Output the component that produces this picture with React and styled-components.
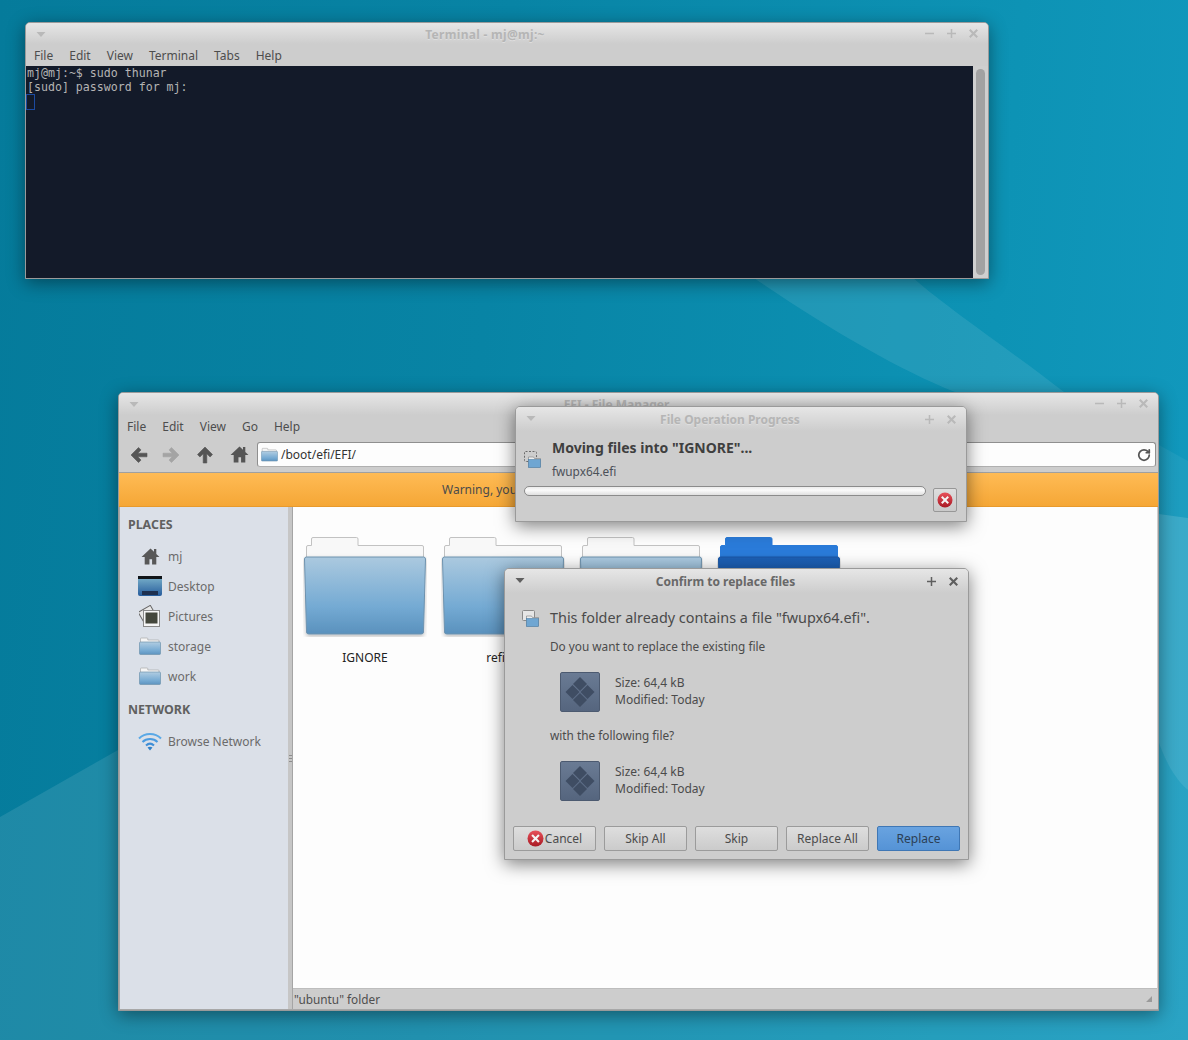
import styled, { createGlobalStyle } from "styled-components";
import { RotateCw } from "lucide-react";

const GlobalStyle = createGlobalStyle`
	html, body {
		margin: 0;
		padding: 0;
	}
	body {
		font-family: "Noto Sans", sans-serif;
		font-size: 12px;
		color: #4b4b4b;
	}
`;

const Desktop = styled.div`
	position: relative;
	width: 1188px;
	height: 1040px;
	overflow: hidden;
	background: linear-gradient(95deg, #057b9b 0%, #0884a5 40%, #0d93b5 80%, #1299be 100%);
`;

const Wallpaper = styled.svg`
	position: absolute;
	inset: 0;
`;

const Window = styled.div`
	position: absolute;
	left: ${(p) => p.$x}px;
	top: ${(p) => p.$y}px;
	width: ${(p) => p.$w}px;
	height: ${(p) => p.$h}px;
	box-sizing: border-box;
	display: flex;
	flex-direction: column;
	background: #cdcdcd;
	border: 1px solid #9a9a9a;
	border-radius: 5px 5px 0 0;
	box-shadow: 0 4px 18px rgba(0, 0, 0, ${(p) => p.$shadow || 0.42});
`;

const TitleBar = styled.div`
	position: relative;
	flex: none;
	height: ${(p) => p.$h || 22}px;
	box-sizing: border-box;
	padding-right: ${(p) => p.$reserve || 22}px;
	padding-top: ${(p) => p.$nudge || 0}px;
	display: flex;
	align-items: center;
	justify-content: center;
	border-radius: 4px 4px 0 0;
	background: linear-gradient(#e6e6e6, #cdcdcd);
	font-size: 12px;
	font-weight: 700;
	letter-spacing: ${(p) => p.$spacing || 0}px;
	color: ${(p) => (p.$active ? "#686868" : "#b5b5b5")};
	text-shadow: ${(p) => (p.$active ? "none" : "0 1px 0 #dedede")};
`;

const TitleMenu = styled.svg`
	position: absolute;
	left: 9px;
	top: 8px;
`;

const TitleButtons = styled.div`
	position: absolute;
	right: 10px;
	top: ${(p) => p.$top || 6}px;
	display: flex;
	gap: 13px;
`;

const MenuBar = styled.div`
	flex: none;
	height: 22px;
	display: flex;
	align-items: center;
	gap: 16px;
	padding-left: 8px;
	font-size: 12px;
	color: #4d4d4d;
`;

const TerminalBody = styled.div`
	flex: 1;
	display: flex;
	min-height: 0;
`;

const Screen = styled.pre`
	flex: 1;
	margin: 0;
	padding: 0 1px;
	background: #131a29;
	color: #b4b4b4;
	font-family: "DejaVu Sans Mono", monospace;
	font-size: 11.6px;
	line-height: 14px;
`;

const Cursor = styled.div`
	width: 9px;
	height: 16px;
	margin-left: -1px;
	border: 1px solid #1c4aa0;
	box-sizing: border-box;
`;

const ScrollTrack = styled.div`
	flex: none;
	width: 15px;
	background: #cfcfcf;
	padding: 3px;
	box-sizing: border-box;
	display: flex;
`;

const ScrollThumb = styled.div`
	flex: 1;
	background: #a2a2a2;
	border-radius: 5px;
`;

const Toolbar = styled.div`
	flex: none;
	height: 35px;
	box-sizing: border-box;
	display: flex;
	align-items: flex-start;
	padding: 5px 2px 0 11px;
`;

const ToolIcon = styled.div`
	width: ${(p) => p.$w}px;
	height: 25px;
	display: flex;
	align-items: center;
`;

const PathEntry = styled.div`
	flex: 1;
	height: 25px;
	box-sizing: border-box;
	display: flex;
	align-items: center;
	gap: 3px;
	padding: 0 4px 0 3px;
	background: #fdfdfd;
	border: 1px solid #8f8f8f;
	border-bottom-color: #b0b0b0;
	border-radius: 3px;
	font-size: 12px;
	color: #333;
`;

const EntrySpacer = styled.div`
	flex: 1;
`;

const Warning = styled.div`
	flex: none;
	height: 35px;
	box-sizing: border-box;
	display: flex;
	align-items: center;
	padding-left: 323px;
	background: linear-gradient(#ffbb55, #f5a736);
	border-top: 1px solid #a0a0a0;
	border-bottom: 1px solid #e89a2c;
	font-size: 12px;
	color: #4b4b4b;
`;

const Panes = styled.div`
	flex: 1;
	display: flex;
	min-height: 0;
	border-left: 1px solid #a8a8a8;
	border-bottom: 1px solid #a8a8a8;
`;

const Sidebar = styled.div`
	flex: none;
	width: 168px;
	box-sizing: border-box;
	padding: 7px 0 0 8px;
	background: #dbe0e8;
`;

const SideHeading = styled.div`
	height: 20px;
	display: flex;
	align-items: center;
	margin-top: ${(p) => p.$top || 0}px;
	margin-bottom: 7px;
	font-weight: 700;
	font-size: 12.4px;
	color: #606060;
`;

const SideRow = styled.div`
	height: 30px;
	display: flex;
	align-items: center;
	gap: 5px;
	padding-left: 8px;
	color: #6b6b6b;
	font-size: 12px;
`;

const SideGlyph = styled.div`
	width: 26px;
	margin-left: 1px;
	display: flex;
	justify-content: center;
`;

const Handle = styled.div`
	position: relative;
	flex: none;
	width: 5px;
	background: #c6c6c6;
	border-right: 1px solid #a5a5a5;
	box-sizing: border-box;
`;

const Grip = styled.div`
	position: absolute;
	left: 1px;
	top: 248px;
	width: 3px;
	height: 7px;
	background: repeating-linear-gradient(#8d8d8d 0 1px, transparent 1px 3px);
`;

const MainColumn = styled.div`
	flex: 1;
	display: flex;
	flex-direction: column;
	min-width: 0;
`;

const Icons = styled.div`
	flex: 1;
	background: #fdfdfd;
	display: flex;
	gap: 12px;
	padding: 26px 0 0 9px;
	margin-right: 1px;
	border-bottom: 1px solid #bdbdbd;
`;

const IconCell = styled.div`
	width: 126px;
	display: flex;
	flex-direction: column;
	align-items: center;
	gap: 13px;
	color: #222;
	font-size: 12px;
	line-height: 16px;
`;

const StatusBar = styled.div`
	flex: none;
	height: 20px;
	display: flex;
	align-items: center;
	justify-content: space-between;
	padding: 0 5px 0 1px;
	font-size: 11.8px;
	color: #4f4f4f;
`;

const ProgressBody = styled.div`
	flex: 1;
	display: flex;
	flex-direction: column;
	padding: 7px 9px 0 8px;
`;

const ProgressTop = styled.div`
	display: flex;
	align-items: flex-start;
	gap: 11px;
`;

const OpIconSlot = styled.div`
	padding-top: 13px;
`;

const ProgressTitle = styled.div`
	font-size: 14px;
	font-weight: 700;
	line-height: 20px;
	color: #3f3f3f;
`;

const ProgressFile = styled.div`
	margin-top: 4px;
	font-size: 11.8px;
	line-height: 18px;
	color: #4b5058;
`;

const ProgressRow = styled.div`
	display: flex;
	align-items: flex-start;
	gap: 7px;
	margin-top: 6px;
`;

const ProgressTrack = styled.div`
	flex: 1;
	height: 10px;
	box-sizing: border-box;
	border: 1px solid #8b8b8b;
	border-radius: 5px;
	background: linear-gradient(#ececec, #fafafa 40%, #e0e0e0);
`;

const StopButton = styled.div`
	flex: none;
	width: 24px;
	height: 24px;
	margin-top: 2px;
	box-sizing: border-box;
	display: flex;
	align-items: center;
	justify-content: center;
	border: 1px solid #979797;
	border-radius: 2px;
	background: linear-gradient(#dedede, #c9c9c9);
`;

const ConfirmBody = styled.div`
	flex: 1;
	display: flex;
	flex-direction: column;
	padding: 15px 8px 8px 17px;
`;

const Headline = styled.div`
	display: flex;
	align-items: center;
	gap: 11px;
	font-size: 14.4px;
	line-height: 20px;
	color: #4a4a4a;
`;

const Prompt = styled.div`
	padding-left: 28px;
	margin-top: ${(p) => p.$top}px;
	font-size: 11.8px;
	line-height: 18px;
	color: #4b4b4b;
`;

const FileRow = styled.div`
	display: flex;
	align-items: center;
	gap: 15px;
	padding-left: 38px;
	margin-top: 17px;
`;

const FileThumb = styled.div`
	width: 40px;
	height: 40px;
	box-sizing: border-box;
	display: flex;
	align-items: center;
	justify-content: center;
	background: linear-gradient(#6a7b94, #55657e);
	border: 1px solid #4c5a70;
	border-radius: 2px;
`;

const FileInfo = styled.div`
	padding-bottom: 2px;
	font-size: 12px;
	line-height: 17px;
	color: #4b4b4b;
`;

const ButtonRow = styled.div`
	margin-top: auto;
	margin-left: -9px;
	display: grid;
	grid-template-columns: repeat(5, 83px);
	gap: 8px;
`;

const DialogButton = styled.div`
	height: 25px;
	box-sizing: border-box;
	display: flex;
	align-items: center;
	justify-content: center;
	gap: 1px;
	font-size: 12px;
	color: ${(p) => (p.$primary ? "#2c3f55" : "#4b4b4b")};
	border: 1px solid ${(p) => (p.$primary ? "#3f77b5" : "#9b9b9b")};
	border-radius: 2px;
	background: ${(p) =>
		p.$primary
			? "linear-gradient(#69a3e0, #5593d6)"
			: "linear-gradient(#dedede, #cbcbcb)"};
`;

const ArrowDown = ({ color }) => (
	<TitleMenu width="12" height="7" viewBox="0 0 12 7">
		<path d="M1.5 1h9L6 6z" fill={color} />
	</TitleMenu>
);

const WinButtons = ({ min, color = "#b9b9b9", top }) => (
	<TitleButtons $top={top}>
		{min && (
			<svg width="9" height="9" viewBox="0 0 12 12">
				<rect x="0" y="5" width="12" height="2" fill={color} />
			</svg>
		)}
		<svg width="9" height="9" viewBox="0 0 12 12">
			<path d="M5 0h2v5h5v2H7v5H5V7H0V5h5z" fill={color} />
		</svg>
		<svg width="9" height="9" viewBox="0 0 12 12">
			<path
				d="M2 0 6 4 10 0l2 2-4 4 4 4-2 2-4-4-4 4-2-2 4-4-4-4z"
				fill={color}
			/>
		</svg>
	</TitleButtons>
);

const ToolArrow = ({ angle = 0, color = "#555555" }) => (
	<svg width="18" height="18" viewBox="0 0 18 18">
		<path
			d="M1 9l7.500-7.500 2.500 2.400-3.200 3.300H17v3.600H7.800l3.200 3.300-2.500 2.400z"
			fill={color}
			stroke={color}
			strokeWidth=".6"
			strokeLinejoin="round"
			transform={`rotate(${angle} 9 9)`}
		/>
	</svg>
);

const HomeIcon = ({ size = 18, color = "#555" }) => (
	<svg width={size} height={size} viewBox="0 0 18 18">
		<path
			d="M9 1.500 .5 9.500h3v7h4.500v-5h2.500v5h4v-7h3l-3-2.900V2h-2.200v2.500z"
			fill={color}
		/>
	</svg>
);

const FolderIcon = ({ w = 22, h = 18 }) => (
	<svg width={w} height={h} viewBox="0 0 22 18">
		<defs>
			<linearGradient id="smallFolder" x1="0" y1="0" x2="0" y2="1">
				<stop offset="0" stopColor="#b1cde2" />
				<stop offset="0.7" stopColor="#74a9d2" />
				<stop offset="1" stopColor="#5d93bf" />
			</linearGradient>
		</defs>
		<path
			d="M1.500 6V1.800q0-.8.8-.8h5.700q.8 0 .8.800V3h10.400q.8 0 .8.800V6z"
			fill="#f6f6f6"
			stroke="#a9a9a9"
			strokeWidth=".7"
		/>
		<rect
			x=".5"
			y="5"
			width="21"
			height="12.500"
			rx="1"
			fill="url(#smallFolder)"
			stroke="#6f93ae"
			strokeWidth=".7"
		/>
	</svg>
);

const BigFolder = ({ selected, id }) => (
	<svg width="124" height="104" viewBox="0 0 124 104">
		<defs>
			<linearGradient id={id} x1="0" y1="0" x2="0" y2="1">
				<stop offset="0" stopColor={selected ? "#1b5fb4" : "#abc9df"} />
				<stop offset="0.65" stopColor={selected ? "#1d63b8" : "#74aad3"} />
				<stop offset="1" stopColor={selected ? "#1a57a4" : "#5a91bd"} />
			</linearGradient>
			<filter id={`${id}-shade`} x="-5%" y="-5%" width="110%" height="115%">
				<feDropShadow dx="0" dy="2" stdDeviation="2" floodOpacity=".25" />
			</filter>
		</defs>
		<path
			d="M3.500 25V14q0-1.500 1.500-1.500h3.500V6q0-1.500 1.500-1.500h43.500q1.500 0 1.500 1.500v6.500H119q1.500 0 1.500 1.500v11z"
			fill={selected ? "#2a7bd9" : "#f8f8f8"}
			stroke={selected ? "#2a7bd9" : "#c2c2c2"}
		/>
		<path
			d="M1.500 26q0-2 2-2h117q2 0 2 2l-2 73q0 2-2 2H5.500q-2 0-2-2z"
			fill={`url(#${id})`}
			stroke={selected ? "#1a57a4" : "#6d92ae"}
			filter={`url(#${id}-shade)`}
		/>
	</svg>
);

const StopIcon = ({ size = 17 }) => (
	<svg width={size} height={size} viewBox="0 0 17 17">
		<defs>
			<linearGradient id={`stop${size}`} x1="0" y1="0" x2="0" y2="1">
				<stop offset="0" stopColor="#e8505a" />
				<stop offset="1" stopColor="#a81a24" />
			</linearGradient>
		</defs>
		<circle cx="8.500" cy="8.500" r="8" fill={`url(#stop${size})`} />
		<path
			d="M5.800 4.300 8.500 7l2.700-2.700 1.500 1.500L10 8.500l2.700 2.700-1.500 1.500L8.500 10l-2.700 2.700-1.500-1.500L7 8.500 4.300 5.800z"
			fill="#f4f4f4"
		/>
	</svg>
);

const TransferIcon = ({ dashed }) => (
	<svg width="17" height="17" viewBox="0 0 17 17">
		<rect
			x=".5"
			y=".5"
			width="12"
			height="10"
			rx="1"
			fill={dashed ? "none" : "#e6e6e6"}
			stroke={dashed ? "#6a6a6a" : "#8a8a8a"}
			strokeDasharray={dashed ? "2 1.500" : "none"}
		/>
		<path d="M4.500 6h5l1 1.500h6v8.500h-12z" fill="#eeeeee" stroke="#7a7a7a" strokeWidth=".6" />
		<rect x="4.500" y="8.500" width="12" height="8" fill="#6fa6d2" stroke="#4f7fa6" strokeWidth=".6" />
	</svg>
);

const DiamondIcon = () => (
	<svg width="30" height="30" viewBox="0 0 30 30">
		<g fill="#3f4d63">
			<path d="M15 0l7 7-7 7-7-7z" />
			<path d="M7.500 8l7 7-7 7-7-7z" />
			<path d="M22.500 8l7 7-7 7-7-7z" />
			<path d="M15 16l7 7-7 7-7-7z" />
		</g>
	</svg>
);

const DesktopIcon = () => (
	<svg width="24" height="20" viewBox="0 0 24 20">
		<defs>
			<linearGradient id="deskFill" x1="0" y1="0" x2="0" y2="1">
				<stop offset="0" stopColor="#7db4cc" />
				<stop offset="1" stopColor="#265c9c" />
			</linearGradient>
		</defs>
		<rect width="24" height="20" rx="2" fill="url(#deskFill)" />
		<rect width="24" height="3" fill="#101418" />
		<rect x="4" y="15" width="16" height="4" fill="#1d3050" />
	</svg>
);

const PicturesIcon = () => (
	<svg width="22" height="22" viewBox="0 0 22 22">
		<rect
			x="1.500"
			y="3"
			width="14"
			height="13"
			fill="#e8e8e8"
			stroke="#666"
			transform="rotate(-30 8.500 9.500)"
		/>
		<rect x="4.500" y="5.500" width="16" height="16" fill="#f6f6f6" stroke="#8a8a8a" />
		<rect x="6.500" y="7.500" width="12" height="11" fill="#44473c" />
	</svg>
);

const WifiIcon = () => (
	<svg width="24" height="20" viewBox="0 0 24 20" fill="none">
		<path d="M1 7.500c6-6 16-6 22 0" stroke="#59a8e6" strokeWidth="2" />
		<path d="M4.500 11c4-4 11-4 15 0" stroke="#4a9be0" strokeWidth="2" />
		<path d="M8 14.500c2.500-2.300 5.500-2.300 8 0" stroke="#3f8ed6" strokeWidth="2" />
		<path d="M12 19.500 9.500 16.500c1.500-1 3.500-1 5 0z" fill="#2f80c8" />
	</svg>
);

const places = [
	{ name: "mj", icon: <HomeIcon size={19} color="#585858" /> },
	{ name: "Desktop", icon: <DesktopIcon /> },
	{ name: "Pictures", icon: <PicturesIcon /> },
	{ name: "storage", icon: <FolderIcon /> },
	{ name: "work", icon: <FolderIcon /> },
];

// the last two labels sit behind the dialog in the screenshot
const folders = [
	{ id: "a", label: "IGNORE" },
	{ id: "b", label: "refind" },
	{ id: "c" },
	{ id: "d", selected: true },
];

const replaceButtons = ["Skip All", "Skip", "Replace All"];

const TerminalWindow = () => (
	<Window $x={25} $y={22} $w={964} $h={257}>
		<TitleBar $h={21} $reserve={44} $nudge={2} $spacing={0.3}>
			<ArrowDown color="#b9b9b9" />
			Terminal - mj@mj:~
			<WinButtons min />
		</TitleBar>
		<MenuBar>
			<span>File</span>
			<span>Edit</span>
			<span>View</span>
			<span>Terminal</span>
			<span>Tabs</span>
			<span>Help</span>
		</MenuBar>
		<TerminalBody>
			<Screen>
				{"mj@mj:~$ sudo thunar\n[sudo] password for mj:\n"}
				<Cursor />
			</Screen>
			<ScrollTrack>
				<ScrollThumb />
			</ScrollTrack>
		</TerminalBody>
	</Window>
);

const FileManager = () => (
	<Window $x={118} $y={392} $w={1041} $h={619}>
		<TitleBar $reserve={44}>
			<ArrowDown color="#b9b9b9" />
			EFI - File Manager
			<WinButtons min />
		</TitleBar>
		<MenuBar>
			<span>File</span>
			<span>Edit</span>
			<span>View</span>
			<span>Go</span>
			<span>Help</span>
		</MenuBar>
		<Toolbar>
			<ToolIcon $w={32}>
				<ToolArrow />
			</ToolIcon>
			<ToolIcon $w={34}>
				<ToolArrow angle={180} color="#a4a4a4" />
			</ToolIcon>
			<ToolIcon $w={34}>
				<ToolArrow angle={90} />
			</ToolIcon>
			<ToolIcon $w={27}>
				<HomeIcon size={19} />
			</ToolIcon>
			<PathEntry>
				<FolderIcon w={17} h={15} />
				/boot/efi/EFI/
				<EntrySpacer />
				<RotateCw size={14} strokeWidth={3} color="#555" />
			</PathEntry>
		</Toolbar>
		<Warning>Warning, you are using the root account. You may harm your system.</Warning>
		<Panes>
			<Sidebar>
				<SideHeading>PLACES</SideHeading>
				{places.map((place) => (
					<SideRow key={place.name}>
						<SideGlyph>{place.icon}</SideGlyph>
						{place.name}
					</SideRow>
				))}
				<SideHeading $top={8}>NETWORK</SideHeading>
				<SideRow>
					<SideGlyph>
						<WifiIcon />
					</SideGlyph>
					Browse Network
				</SideRow>
			</Sidebar>
			<Handle>
				<Grip />
			</Handle>
			<MainColumn>
				<Icons>
					{folders.map((folder) => (
						<IconCell key={folder.id}>
							<BigFolder
								id={`folder-${folder.id}`}
								selected={folder.selected}
							/>
							{folder.label}
						</IconCell>
					))}
				</Icons>
				<StatusBar>
					"ubuntu" folder
					<svg width="8" height="8" viewBox="0 0 8 8">
						<path d="M7 1v6H1zM7 4v3H4z" fill="#9a9a9a" />
					</svg>
				</StatusBar>
			</MainColumn>
		</Panes>
	</Window>
);

const ProgressDialog = () => (
	<Window $x={515} $y={406} $w={452} $h={116} $shadow={0.5}>
		<TitleBar $h={24}>
			<ArrowDown color="#b9b9b9" />
			File Operation Progress
			<WinButtons top={8} />
		</TitleBar>
		<ProgressBody>
			<ProgressTop>
				<OpIconSlot>
					<TransferIcon dashed />
				</OpIconSlot>
				<div>
					<ProgressTitle>Moving files into "IGNORE"...</ProgressTitle>
					<ProgressFile>fwupx64.efi</ProgressFile>
				</div>
			</ProgressTop>
			<ProgressRow>
				<ProgressTrack />
				<StopButton>
					<StopIcon size={16} />
				</StopButton>
			</ProgressRow>
		</ProgressBody>
	</Window>
);

const FileDetails = () => (
	<FileRow>
		<FileThumb>
			<DiamondIcon />
		</FileThumb>
		<FileInfo>
			Size: 64,4 kB
			<br />
			Modified: Today
		</FileInfo>
	</FileRow>
);

const ConfirmDialog = () => (
	<Window $x={504} $y={568} $w={465} $h={292} $shadow={0.5}>
		<TitleBar $h={24} $active>
			<ArrowDown color="#5f5f5f" />
			Confirm to replace files
			<WinButtons color="#5f5f5f" top={8} />
		</TitleBar>
		<ConfirmBody>
			<Headline>
				<TransferIcon />
				This folder already contains a file "fwupx64.efi".
			</Headline>
			<Prompt $top={9}>Do you want to replace the existing file</Prompt>
			<FileDetails />
			<Prompt $top={14}>with the following file?</Prompt>
			<FileDetails />
			<ButtonRow>
				<DialogButton>
					<StopIcon />
					Cancel
				</DialogButton>
				{replaceButtons.map((label) => (
					<DialogButton key={label}>{label}</DialogButton>
				))}
				<DialogButton $primary>Replace</DialogButton>
			</ButtonRow>
		</ConfirmBody>
	</Window>
);

const App = () => (
	<Desktop>
		<GlobalStyle />
		<Wallpaper width="1188" height="1040" viewBox="0 0 1188 1040">
			<path d="M754 278C830 330 900 370 955 392H1064C1010 350 950 310 913 278Z" fill="#fff" opacity=".09" />
			<path d="M0 817 118 750 1159 743C1165 760 1175 780 1188 790V1040H0Z" fill="#fff" opacity=".1" />
			<path d="M1159 514 1188 518V790C1175 780 1165 760 1159 743Z" fill="#fff" opacity=".18" />
			<path d="M1159 445 1188 461V518L1159 514Z" fill="#fff" opacity=".05" />
		</Wallpaper>
		<TerminalWindow />
		<FileManager />
		<ProgressDialog />
		<ConfirmDialog />
	</Desktop>
);

export default App;
